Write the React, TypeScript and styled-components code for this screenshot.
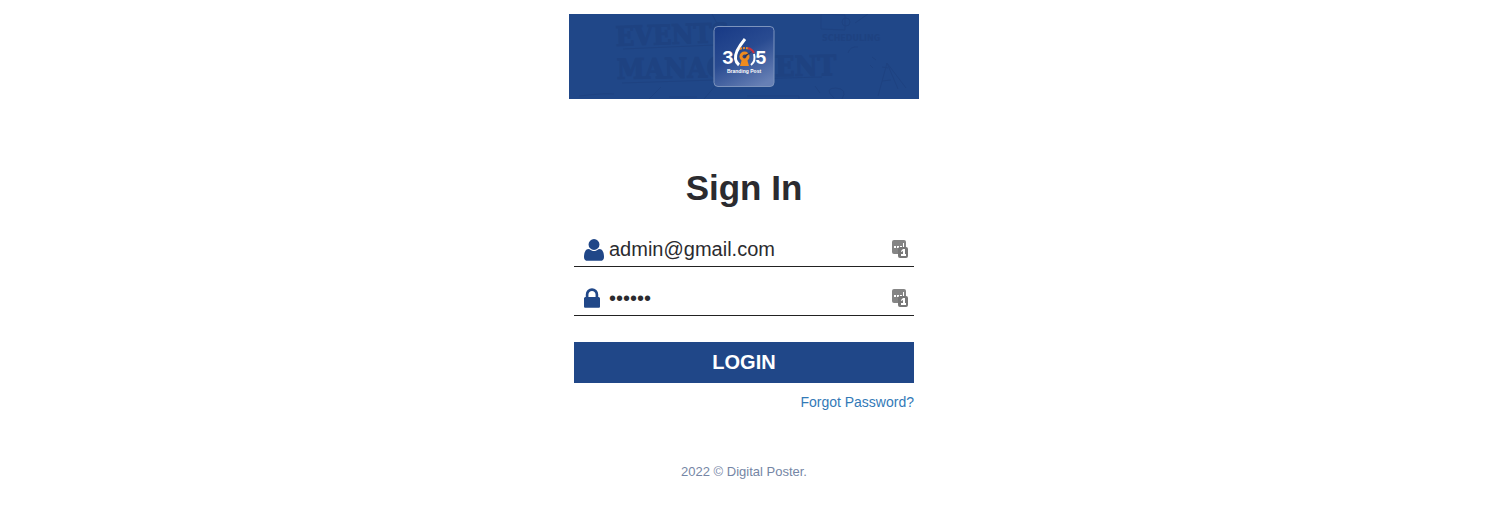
import React, { useState } from "react";
import styled, { createGlobalStyle } from "styled-components";

const navy = "#204788";
const ink = "#2b2b2f";
const doodle = "#1e4281";

const GlobalStyle = createGlobalStyle`
  *, *::before, *::after { box-sizing: border-box; }
  body {
    margin: 0;
    background: #fff;
    color: ${ink};
    font-family: "Liberation Sans", Arial, Helvetica, sans-serif;
  }
`;

const Page = styled.div`
  display: flex;
  flex-direction: column;
  align-items: center;
  padding: 14px 6px 32px 0;
`;

const Panel = styled.main`
  width: 100%;
  max-width: 350px;
`;

const Banner = styled.header`
  display: grid;
  place-items: center;
  height: 85px;
  overflow: hidden;
  background: ${navy};

  > svg { grid-area: 1 / 1; display: block; }
`;

const Form = styled.form`
  display: flex;
  flex-direction: column;
  padding: 69px 5px 0;
`;

const Title = styled.h1`
  margin: 0 0 24px;
  font-size: 35px;
  line-height: 40px;
  text-align: center;
`;

const Field = styled.label`
  display: flex;
  align-items: center;
  height: 35px;
  margin-bottom: 14px;
  padding: 0 6px 0 10px;
  border-bottom: 1px solid #222;
`;

const FieldIcon = styled.span`
  display: flex;
  flex: none;
  width: 25px;
  color: ${navy};
`;

const Input = styled.input`
  flex: 1;
  min-width: 0;
  height: 32px;
  padding: 0;
  border: 0;
  outline: 0;
  background: transparent;
  color: ${ink};
  font: 20px/24px "Liberation Sans", Arial, sans-serif;
`;

const LoginButton = styled.button`
  height: 41px;
  margin: 12px 0 10px;
  padding: 0 0 2px;
  border: 0;
  background: ${navy};
  color: #fff;
  font: bold 20px/24px "Liberation Sans", Arial, sans-serif;
  cursor: pointer;
`;

const ForgotLink = styled.a`
  align-self: flex-end;
  color: #337ab7;
  font-size: 14px;
  line-height: 18px;
  text-decoration: none;
`;

const Footer = styled.footer`
  margin-top: 53px;
  color: #7586a5;
  font-size: 13px;
  line-height: 16px;
`;

const BannerArt = () => (
  <svg width="350" height="85" viewBox="0 0 350 85" aria-hidden="true">
    <g fill={doodle} stroke={doodle} fontFamily="DejaVu Serif Condensed, DejaVu Serif, serif" fontWeight="bold">
      <text x="47" y="32" fontSize="27" transform="rotate(-2 47 32)">EVENTS</text>
      <text x="48" y="65" fontSize="28" transform="rotate(-1 48 65)">MANAGEMENT</text>
    </g>
    <g fill={doodle} fontFamily="DejaVu Sans, sans-serif" fontWeight="bold" fontSize="8">
      <text x="253" y="27">SCHEDULING</text>
      <text x="178" y="20">ON</text>
    </g>
    <g fill="none" stroke={doodle} strokeWidth="1">
      <path d="M54 35 146 31M53 69 146 66M180 65l73-2M252 0v15l24 1V1zM273 8a4 4 0 1 0 8 0 4 4 0 1 0-8 0M286 9l13-9M279 39q2-7 10-6M303 43l4 3M301 51l3 3M313 53l6 1" />
      <path d="M309 82l9-33 11 26M318 49l19 25M313 67l9-1M246 72l5 7M178 82h52v3M265 84q-11-10 2-10 12 1 6 11M143 0l9 17M80 85l12-12M135 85l12-14M10 82q25-3 35-2M100 83h28" />
    </g>
  </svg>
);

const Logo = () => (
  <svg width="62" height="62" viewBox="0 0 62 62" role="img" aria-label="365 Branding Post">
    <defs>
      <linearGradient id="tile" x1="0.2" y1="0" x2="0.75" y2="1">
        <stop offset="0" stopColor="#1a3c87" />
        <stop offset="0.45" stopColor="#294b91" />
        <stop offset="1" stopColor="#6780b5" />
      </linearGradient>
    </defs>
    <rect x="1" y="0.500" width="60" height="60" rx="4" fill="url(#tile)" stroke="#7d94bd" />
    <g fill="#fff" fontFamily="Inter, sans-serif" fontWeight="bold">
      <text x="9" y="38" fontSize="18">3</text>
      <text x="42" y="38" fontSize="18">5</text>
      <text x="31" y="47" fontFamily="Liberation Sans, sans-serif" fontSize="5" textAnchor="middle">Branding Post</text>
    </g>
    <path d="M32 13Q27 19 24 25 20 34 26 39" fill="none" stroke="#fff" strokeWidth="3" />
    <path d="M38 39q5-4 3-11" fill="none" stroke="#fff" strokeWidth="2" />
    <path d="M27 23q5-2 9 0" fill="none" stroke="#ef8a24" strokeWidth="2" strokeDasharray="2 1" />
    <path d="M35 22q4 1 6 5" fill="none" stroke="#c9303f" strokeWidth="2" />
    <circle cx="31.500" cy="30.500" r="5" fill="#ee8b20" />
    <path d="M29 33h5l2 7h-9z" fill="#ee8b20" />
    <circle cx="31.500" cy="30.500" r="2" fill="#35447b" />
    <path d="m31 32 1-3 8-4z" fill="#25345f" />
  </svg>
);

const UserIcon = () => (
  <svg width="20" height="23" viewBox="0 -64 1408 1600" fill="currentColor" aria-hidden="true">
    <path
      transform="matrix(1 0 0 -1 0 1408)"
      d="M1408 131q0 -120 -73 -189.500t-194 -69.500h-874q-121 0 -194 69.500t-73 189.500q0 53 3.500 103.500t14 109t26.500 108.500t43 97.500t62 81t85.500 53.500t111.500 20q9 0 42 -21.500t74.500 -48t108 -48t133.500 -21.500t133.500 21.500t108 48t74.500 48t42 21.500q61 0 111.500 -20t85.500 -53.500t62 -81t43 -97.500t26.500 -108.500t14 -109t3.500 -103.500zM1088 1024q0 -159 -112.500 -271.500t-271.500 -112.500t-271.500 112.500t-112.500 271.500t112.500 271.500t271.500 112.500t271.500 -112.500t112.500 -271.500z"
    />
  </svg>
);

const LockIcon = () => (
  <svg width="16" height="20" viewBox="320 128 1152 1408" fill="currentColor" aria-hidden="true">
    <path d="M640 768h512v-192q0-106-75-181t-181-75-181 75-75 181v192zm832 96v576q0 40-28 68t-68 28h-960q-40 0-68-28t-28-68v-576q0-40 28-68t68-28h32v-192q0-184 132-316t316-132 316 132 132 316v192h32q40 0 68 28t28 68z" />
  </svg>
);

const AutofillIcon = () => (
  <svg width="16" height="18" viewBox="0 0 16 18" aria-hidden="true">
    <rect width="14" height="14" rx="2" fill="#858585" />
    <path d="M2 6h2v2H2zM5 6h2v2H5zM8 6h2v2H8zM11 3h1v5h-1z" fill="#fff" />
    <rect x="6" y="7" width="10" height="11" rx="2" fill="#777" />
    <path d="M9 11 11 9h2v5h1v2H9v-2h2v-3l-2 1z" fill="#fff" />
  </svg>
);

export default function App() {
  const [email, setEmail] = useState("admin@gmail.com");
  const [password, setPassword] = useState("123456");

  return (
    <>
      <GlobalStyle />
      <Page>
        <Panel>
          <Banner>
            <BannerArt />
            <Logo />
          </Banner>
          <Form onSubmit={(e: React.FormEvent) => e.preventDefault()}>
            <Title>Sign In</Title>
            <Field>
              <FieldIcon><UserIcon /></FieldIcon>
              <Input type="email" aria-label="Email" value={email} onChange={(e) => setEmail(e.target.value)} />
              <AutofillIcon />
            </Field>
            <Field>
              <FieldIcon><LockIcon /></FieldIcon>
              <Input type="password" aria-label="Password" value={password} onChange={(e) => setPassword(e.target.value)} />
              <AutofillIcon />
            </Field>
            <LoginButton type="submit">LOGIN</LoginButton>
            <ForgotLink href="#forgot">Forgot Password?</ForgotLink>
          </Form>
        </Panel>
        <Footer>2022 © Digital Poster.</Footer>
      </Page>
    </>
  );
}
